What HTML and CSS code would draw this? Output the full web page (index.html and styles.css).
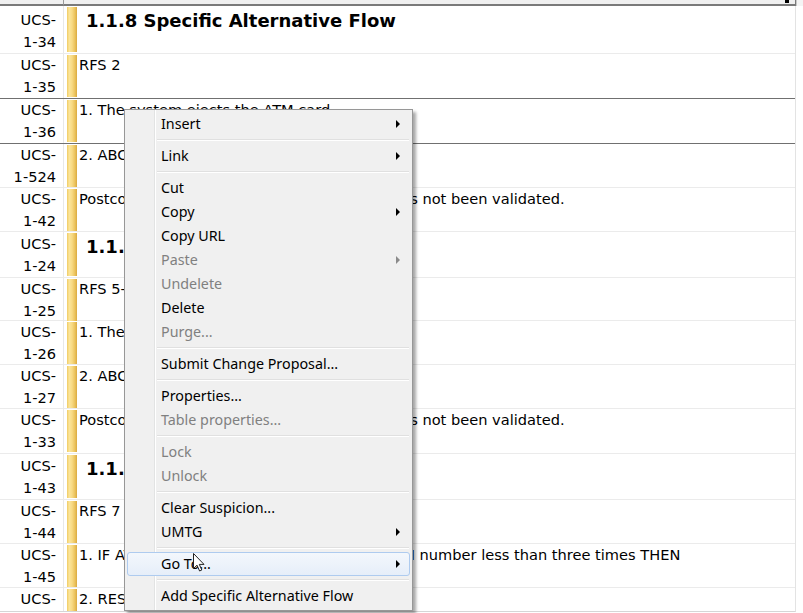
FILE: index.html
```html
<!DOCTYPE html>
<html>
<head>
<meta charset="utf-8">
<link rel="stylesheet" href="styles.css">
</head>
<body>
<div class="app">
  <div class="header">
    <div class="hid"></div>
    <div class="hmain"><span class="hmark"></span></div>
    <div class="hend"></div>
  </div>
  <div class="viewport">
    <div class="list">
      <div class="row hrow first"><div class="id">UCS-<br>1-34</div><div class="cell"><span class="bar"></span><div class="text h">1.1.8 Specific Alternative Flow</div></div></div>
      <div class="row sel"><div class="id">UCS-<br>1-35</div><div class="cell"><span class="bar"></span><div class="text">RFS 2</div></div></div>
      <div class="row sel"><div class="id">UCS-<br>1-36</div><div class="cell"><span class="bar"></span><div class="text">1. The system ejects the ATM card</div></div></div>
      <div class="row"><div class="id">UCS-<br>1-524</div><div class="cell"><span class="bar"></span><div class="text">2. ABC returns to the main flow</div></div></div>
      <div class="row"><div class="id">UCS-<br>1-42</div><div class="cell"><span class="bar"></span><div class="text">Postcondition: The ATM customer card PIN has not been validated.</div></div></div>
      <div class="row hrow"><div class="id">UCS-<br>1-24</div><div class="cell"><span class="bar"></span><div class="text h">1.1.9 Specific Alternative Flow</div></div></div>
      <div class="row short"><div class="id">UCS-<br>1-25</div><div class="cell"><span class="bar"></span><div class="text">RFS 5-6</div></div></div>
      <div class="row"><div class="id">UCS-<br>1-26</div><div class="cell"><span class="bar"></span><div class="text">1. The system ejects the ATM card</div></div></div>
      <div class="row"><div class="id">UCS-<br>1-27</div><div class="cell"><span class="bar"></span><div class="text">2. ABC returns to the main flow</div></div></div>
      <div class="row tall"><div class="id">UCS-<br>1-33</div><div class="cell"><span class="bar"></span><div class="text">Postcondition: The ATM customer card PIN has not been validated.</div></div></div>
      <div class="row hrow"><div class="id">UCS-<br>1-43</div><div class="cell"><span class="bar"></span><div class="text h">1.1.10 Bounded Flow</div></div></div>
      <div class="row"><div class="id">UCS-<br>1-44</div><div class="cell"><span class="bar"></span><div class="text">RFS 7</div></div></div>
      <div class="row"><div class="id">UCS-<br>1-45</div><div class="cell"><span class="bar"></span><div class="text">1. IF ATM customer has entered an invalid PIN number less than three times THEN</div></div></div>
      <div class="row"><div class="id">UCS-<br>1-46</div><div class="cell"><span class="bar"></span><div class="text">2. RESUME STEP 2</div></div></div>
    </div>
  </div>

  <div class="menu">
    <div class="item sub">Insert</div>
    <div class="sep"></div>
    <div class="item sub">Link</div>
    <div class="sep"></div>
    <div class="item">Cut</div>
    <div class="item sub">Copy</div>
    <div class="item">Copy URL</div>
    <div class="item sub dis">Paste</div>
    <div class="item dis">Undelete</div>
    <div class="item">Delete</div>
    <div class="item dis">Purge...</div>
    <div class="sep"></div>
    <div class="item">Submit Change Proposal...</div>
    <div class="sep"></div>
    <div class="item">Properties...</div>
    <div class="item dis">Table properties...</div>
    <div class="sep"></div>
    <div class="item dis">Lock</div>
    <div class="item dis">Unlock</div>
    <div class="sep"></div>
    <div class="item">Clear Suspicion...</div>
    <div class="item sub">UMTG</div>
    <div class="sep"></div>
    <div class="item sub hover">Go To...</div>
    <div class="sep"></div>
    <div class="item">Add Specific Alternative Flow</div>
  </div>

  <svg class="cursor" width="14" height="21" viewBox="0 0 14 21">
    <path d="M1.5 1.5 L1.5 16.5 L5 13.2 L7.6 19 L9.8 18 L7.3 12.4 L12 12.4 Z" fill="#fff" stroke="#222" stroke-width="1" stroke-linejoin="round"/>
  </svg>
</div>
</body>
</html>
```
FILE: styles.css
```css
* { box-sizing: border-box; }
html, body { margin: 0; padding: 0; background: #fff; }
.app {
  position: relative;
  width: 803px;
  height: 613px;
  overflow: hidden;
  background: #fff;
  font-family: "DejaVu Sans", Tahoma, sans-serif;
  font-size: 14.6px;
  color: #000;
}
.header {
  display: flex;
  height: 6px;
}
.hid {
  width: 64px;
  background: #f0f0f0;
  border-bottom: 2px solid #7a7a7a;
  border-right: 1px solid #9a9a9a;
}
.hmain {
  position: relative;
  width: 732px;
  background: #f0f0f0;
  border-bottom: 2px solid #7a7a7a;
  border-right: 1px solid #7a7a7a;
}
.hmark {
  position: absolute;
  right: 6px;
  top: 0;
  width: 4px;
  height: 3px;
  background: #000;
}
.hend {
  flex: 1;
  background: #f4f4f4;
  border-left: 1px solid #c8c8c8;
}
.viewport {
  height: 606px;
  width: 796px;
  overflow: hidden;
  border-right: 1px solid #e3e3e3;
  border-bottom: 1px solid #d6d6d6;
}
.row {
  display: grid;
  grid-template-columns: 64px 1fr;
  height: 44px;
  border-bottom: 1px solid #ebebeb;
}
.row.short { height: 43px; }
.row.tall { height: 45px; }
.row.hrow { height: 46px; }
.row.first { height: 48px; }
.row.sel { height: 45px; border-bottom-color: #707070; }
.id {
  padding: 0 7px 0 0;
  text-align: right;
  line-height: 22px;
  border-right: 1px solid #e8e8e8;
}
.hrow .id { padding-top: 1px; }
.first .id { padding-top: 3px; }
.cell {
  display: flex;
  padding: 1px 0 1px 3px;
}
.bar {
  flex: none;
  width: 10px;
  background: linear-gradient(to right, #f0cb62 0%, #fbe59a 22%, #f8da84 50%, #ebc25b 80%, #d9a940 100%);
}
.text {
  margin-top: -1px;
  padding-left: 2px;
  line-height: 22px;
  white-space: nowrap;
}
.text.h {
  font-weight: bold;
  font-size: 18px;
  line-height: 24px;
  padding-top: 3px;
  padding-left: 9px;
}

.menu {
  position: absolute;
  left: 124px;
  top: 109px;
  width: 289px;
  padding: 2px;
  background: #f0f0f0;
  border: 1px solid #979797;
  box-shadow: 3px 3px 3px rgba(0, 0, 0, 0.35);
  font-family: "Noto Sans", "Segoe UI", sans-serif;
  font-size: 14.3px;
  color: #000;
  background-image: linear-gradient(to right, transparent 29px, #e2e3e3 29px, #e2e3e3 30px, #ffffff 30px, #ffffff 31px, transparent 31px);
}
.item {
  position: relative;
  height: 24px;
  line-height: 24px;
  padding-left: 34px;
  white-space: nowrap;
}
.item.dis { color: #808080; }
.item.sub::after {
  content: "";
  position: absolute;
  right: 10px;
  top: 8px;
  border-left: 4px solid #000;
  border-top: 4px solid transparent;
  border-bottom: 4px solid transparent;
}
.item.sub.dis::after { border-left-color: #8a8a8a; }
.item.hover {
  background: linear-gradient(#f3f7fc, #e6eef9);
  border: 1px solid #aecbef;
  border-radius: 3px;
  line-height: 22px;
  padding-left: 33px;
}
.item.hover::after { right: 9px; top: 7px; }
.sep {
  height: 8px;
  margin-left: 30px;
  margin-right: 1px;
  background: linear-gradient(to bottom, transparent 3px, #e0e0e0 3px, #e0e0e0 4px, #ffffff 4px, #ffffff 5px, transparent 5px);
}
.cursor {
  position: absolute;
  left: 192px;
  top: 552px;
}
```
